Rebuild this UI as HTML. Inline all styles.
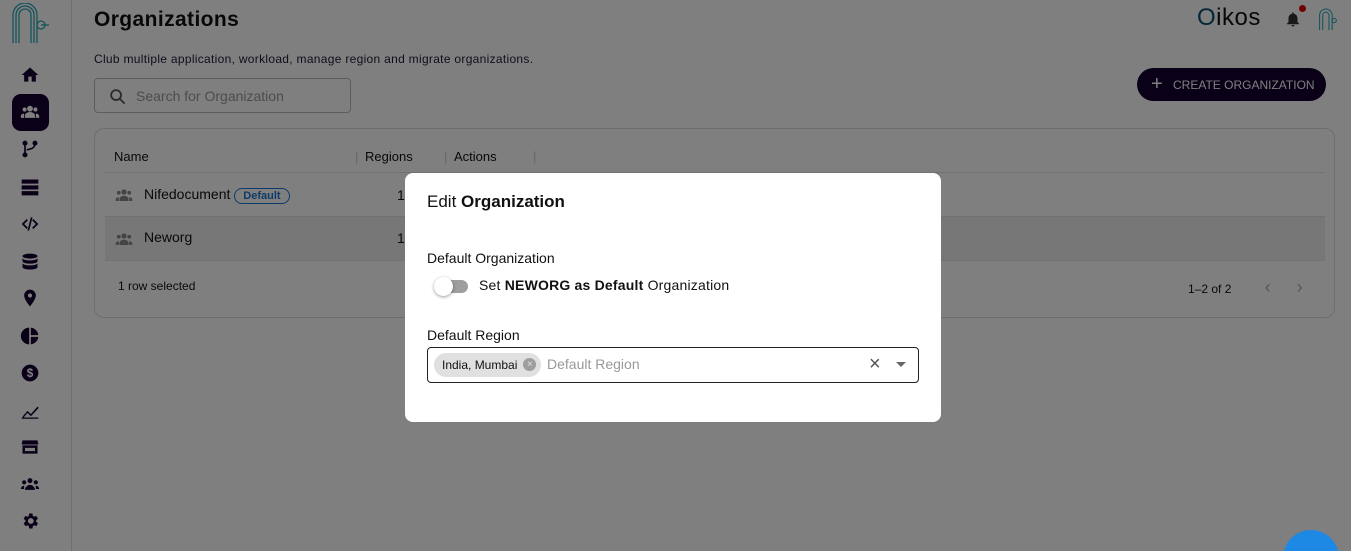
<!DOCTYPE html>
<html style="overflow:hidden;width:1351px;height:551px"><head><meta charset="utf-8"><style>
*{box-sizing:border-box;margin:0;padding:0}
body{width:1351px;height:551px;overflow:hidden;background:#fff;font-family:"Liberation Sans",sans-serif;color:#111;position:relative}
.side{position:absolute;left:0;top:0;width:72px;height:551px;border-right:1px solid #ddd;background:#fff}
.ic{position:absolute;left:20px;width:20px;height:20px;fill:#14002e}
.sel{position:absolute;left:12px;top:94px;width:37px;height:37px;border-radius:9px;background:#14002e}
h1{position:absolute;left:94px;top:8px;font-size:21px;font-weight:bold;letter-spacing:.4px}
.sub{position:absolute;left:94px;top:52px;font-size:12px;color:#1b1b3a;letter-spacing:.3px}
.search{position:absolute;left:94px;top:78px;width:257px;height:35px;border:1px solid #bbb;border-radius:4px;font-size:14px;color:#999;padding:9px 0 0 41px}
.btn{position:absolute;left:1137px;top:68px;width:189px;height:33px;border-radius:17px;background:#14002e;color:#fff;font-size:12px;padding:10px 0 0 36px}
.card{position:absolute;left:94px;top:128px;width:1241px;height:190px;border:1px solid #ddd;border-radius:10px}
.row{position:absolute;left:10px;width:1220px;border-bottom:1px solid #e2e2e2;font-size:14px}
.oikos{position:absolute;left:1197px;top:4px;font-size:24px;color:#111;letter-spacing:.5px}
.ov{position:absolute;left:0;top:0;width:1351px;height:551px;background:rgba(0,0,0,.5)}
.dlg{position:absolute;left:405px;top:173px;width:536px;height:249px;background:#fff;border-radius:8px}
.dlg div{position:absolute}
.ri{position:absolute;left:10px;top:14px;width:18px;height:16px;fill:#888}
</style></head><body>
<div class="side">
<svg style="position:absolute;left:10px;top:3px" width="42" height="42" viewBox="0 0 42 42" fill="none" stroke="#2aa8b8" stroke-width="1.3"><path d="M3 40V12a12 12 0 0 1 24 0v28M6 40V12a9 9 0 0 1 18 0v28M9 40V12a6 6 0 0 1 12 0v28"/><circle cx="31" cy="22" r="4"/><path d="M31 22h8"/></svg>
<svg class="ic" style="top:65px" viewBox="0 0 24 24"><path d="M10 20v-6h4v6h5v-8h3L12 3 2 12h3v8z"/></svg>
<div class="sel"></div>
<svg class="ic" style="top:102px;fill:#fff" viewBox="0 0 24 24"><circle cx="12" cy="8" r="3.5"/><circle cx="5.5" cy="9" r="2.5"/><circle cx="18.5" cy="9" r="2.5"/><path d="M6 19v-3c0-2 3-4 6-4s6 2 6 4v3zM1 19v-2c0-2 2-3 4-3v5zM23 19v-2c0-2-2-3-4-3v5z"/></svg>
<svg class="ic" style="top:139px" viewBox="0 0 24 24"><circle cx="6" cy="5" r="3"/><circle cx="6" cy="19" r="3"/><circle cx="18" cy="5" r="3"/><path d="M5 5h2v14H5zM17 5h2c0 6-4 8-11 9v-2c6-1 9-2 9-7z"/></svg>
<svg class="ic" style="top:177px" viewBox="0 0 24 24"><path d="M2 3h20v5H2zM2 10h20v5H2zM2 17h20v5H2z"/></svg>
<svg class="ic" style="top:214px" viewBox="0 0 24 24"><path d="M8 6l-6 6 6 6 1.5-1.5L5 12l4.5-4.5zM16 6l-1.5 1.5L19 12l-4.5 4.5L16 18l6-6zM13 4h2l-4 16H9z"/></svg>
<svg class="ic" style="top:252px" viewBox="0 0 24 24"><ellipse cx="12" cy="5" rx="9" ry="3"/><path d="M3 7v4c0 2 4 3 9 3s9-1 9-3V7c0 2-4 3-9 3S3 9 3 7zM3 13v5c0 2 4 3 9 3s9-1 9-3v-5c0 2-4 3-9 3s-9-1-9-3z"/></svg>
<svg class="ic" style="top:288px" viewBox="0 0 24 24"><path d="M12 2a7 7 0 0 0-7 7c0 5 7 13 7 13s7-8 7-13a7 7 0 0 0-7-7zm0 9.5a2.5 2.5 0 1 1 0-5 2.5 2.5 0 0 1 0 5z"/></svg>
<svg class="ic" style="top:326px" viewBox="0 0 24 24"><path d="M11 2v20a10 10 0 0 1 0-20zM13 2v9h9a10 10 0 0 0-9-9zM13 13v9a10 10 0 0 0 9-9z"/></svg>
<svg class="ic" style="top:363px" viewBox="0 0 24 24"><circle cx="12" cy="12" r="10"/><text x="12" y="17" font-size="14" font-weight="bold" fill="#fff" text-anchor="middle" font-family="Liberation Sans">$</text></svg>
<svg class="ic" style="top:400px" viewBox="0 0 24 24"><path d="M3 20l6-7 4 4 8-9 1.5 1.5-9.5 10-4-4-5 6zM2 21h20v1.5H2z"/></svg>
<svg class="ic" style="top:437px" viewBox="0 0 24 24"><path d="M3 4h18l1 5H2zM3 10h18v10H3zM6 13v4h12v-4z"/></svg>
<svg class="ic" style="top:474px" viewBox="0 0 24 24"><circle cx="12" cy="8" r="3"/><circle cx="5" cy="10" r="2.5"/><circle cx="19" cy="10" r="2.5"/><path d="M6 19c0-3 3-6 6-6s6 3 6 6zM1 18c0-2 2-4 4-4v4zM23 18c0-2-2-4-4-4v4z"/></svg>
<svg class="ic" style="top:511px" viewBox="0 0 24 24"><path d="M19.4 13a7.5 7.5 0 0 0 0-2l2.1-1.6-2-3.5-2.5 1a7 7 0 0 0-1.7-1L15 3h-4l-.4 2.9a7 7 0 0 0-1.7 1l-2.5-1-2 3.5L6.5 11a7.5 7.5 0 0 0 0 2l-2.1 1.6 2 3.5 2.5-1a7 7 0 0 0 1.7 1L11 21h4l.4-2.9a7 7 0 0 0 1.7-1l2.5 1 2-3.5zM13 15.5a3.5 3.5 0 1 1 0-7 3.5 3.5 0 0 1 0 7z"/></svg>
</div>
<h1>Organizations</h1>
<div class="sub">Club multiple application, workload, manage region and migrate organizations.</div>
<div class="search"><svg style="position:absolute;left:14px;top:9px" width="17" height="17" viewBox="0 0 24 24" fill="none" stroke="#555" stroke-width="2.5"><circle cx="10" cy="10" r="7"/><path d="M15 15l7 7"/></svg>Search for Organization</div>
<div class="oikos"><span style="color:#0a4d6e">O</span>ikos</div>
<svg style="position:absolute;left:1284px;top:9px" width="18" height="20" viewBox="0 0 24 24" fill="#333"><path d="M12 22a2 2 0 0 0 2-2h-4a2 2 0 0 0 2 2zm6-6V11c0-3-2-5.5-5-6V4a1 1 0 0 0-2 0v1c-3 .5-5 3-5 6v5l-2 2v1h16v-1z"/></svg>
<div style="position:absolute;left:1299px;top:5px;width:7px;height:7px;border-radius:50%;background:#d00"></div>
<svg style="position:absolute;left:1318px;top:8px" width="22" height="24" viewBox="0 0 42 42" fill="none" stroke="#2aa8b8" stroke-width="2"><path d="M3 40V12a12 12 0 0 1 24 0v28M9 40V12a6 6 0 0 1 12 0v28"/><circle cx="31" cy="22" r="4"/></svg>
<div class="btn"><span style="position:absolute;left:14px;top:5px;font-size:20px">+</span>CREATE ORGANIZATION</div>
<div class="card">
<div class="row" style="top:0;height:44px;padding:20px 0 0 9px;font-size:13px">Name<span style="position:absolute;left:250px;top:20px;color:#ccc">|</span><span style="position:absolute;left:260px;top:20px">Regions</span><span style="position:absolute;left:339px;top:20px;color:#ccc">|</span><span style="position:absolute;left:349px;top:20px">Actions</span><span style="position:absolute;left:428px;top:20px;color:#ccc">|</span></div>
<div class="row" style="top:44px;height:44px;padding:13px 0 0 39px"><svg class="ri" viewBox="0 0 24 20"><circle cx="12" cy="6" r="3.5"/><circle cx="5" cy="7" r="2.5"/><circle cx="19" cy="7" r="2.5"/><path d="M6 18v-3c0-2 3-4 6-4s6 2 6 4v3zM1 18v-2c0-2 2-3 4-3v5zM23 18v-2c0-2-2-3-4-3v5z"/></svg>Nifedocument <span style="display:inline-block;border:1px solid #1976d2;color:#1976d2;border-radius:9px;font-size:11px;font-weight:bold;padding:1px 8px">Default</span><span style="position:absolute;left:292px;top:14px">1</span></div>
<div class="row" style="top:88px;height:44px;padding:12px 0 0 39px;background:#eee"><svg class="ri" viewBox="0 0 24 20"><circle cx="12" cy="6" r="3.5"/><circle cx="5" cy="7" r="2.5"/><circle cx="19" cy="7" r="2.5"/><path d="M6 18v-3c0-2 3-4 6-4s6 2 6 4v3zM1 18v-2c0-2 2-3 4-3v5zM23 18v-2c0-2-2-3-4-3v5z"/></svg>Neworg<span style="position:absolute;left:292px;top:13px">1</span></div>
<div style="position:absolute;left:23px;top:150px;font-size:12px">1 row selected</div>
<div style="position:absolute;left:1093px;top:148px;font-size:12px">1–2 of 2 <span style="margin-left:30px;color:#aaa;font-size:18px">‹</span><span style="margin-left:26px;color:#aaa;font-size:18px">›</span></div>
</div>
<div class="ov"></div>
<div style="position:absolute;left:1283px;top:530px;width:56px;height:21px;overflow:hidden"><div style="width:56px;height:56px;border-radius:50%;background:#1e88e5"></div></div>
<div class="dlg">
<div style="left:22px;top:19px;font-size:17px">Edit <b>Organization</b></div>
<div style="left:22px;top:77px;font-size:14px">Default Organization</div>
<div style="left:32px;top:107px;width:31px;height:13px;border-radius:7px;background:#9e9e9e"></div>
<div style="left:29px;top:104px;width:19px;height:19px;border-radius:50%;background:#fff;box-shadow:0 1px 3px rgba(0,0,0,.4)"></div>
<div style="left:74px;top:104px;font-size:14px;letter-spacing:.2px">Set <b>NEWORG as Default</b> Organization</div>
<div style="left:22px;top:154px;font-size:14px">Default Region</div>
<div style="left:22px;top:174px;width:492px;height:36px;border:1px solid #222;border-radius:4px">
<div style="left:6px;top:5px;height:24px;border-radius:12px;background:#e0e0e0;font-size:12px;padding:5px 24px 0 8px">India, Mumbai<span style="position:absolute;right:5px;top:5px;width:13px;height:13px;border-radius:50%;background:#9e9e9e;color:#e0e0e0;font-size:10px;text-align:center;line-height:13px">×</span></div>
<div style="left:119px;top:8px;font-size:14px;color:#999">Default Region</div>
<div style="left:441px;top:5px;font-size:20px;color:#555">×</div>
<div style="left:468px;top:14px;width:0;height:0;border-left:5px solid transparent;border-right:5px solid transparent;border-top:5px solid #666"></div>
</div>
</div>
</body></html>
